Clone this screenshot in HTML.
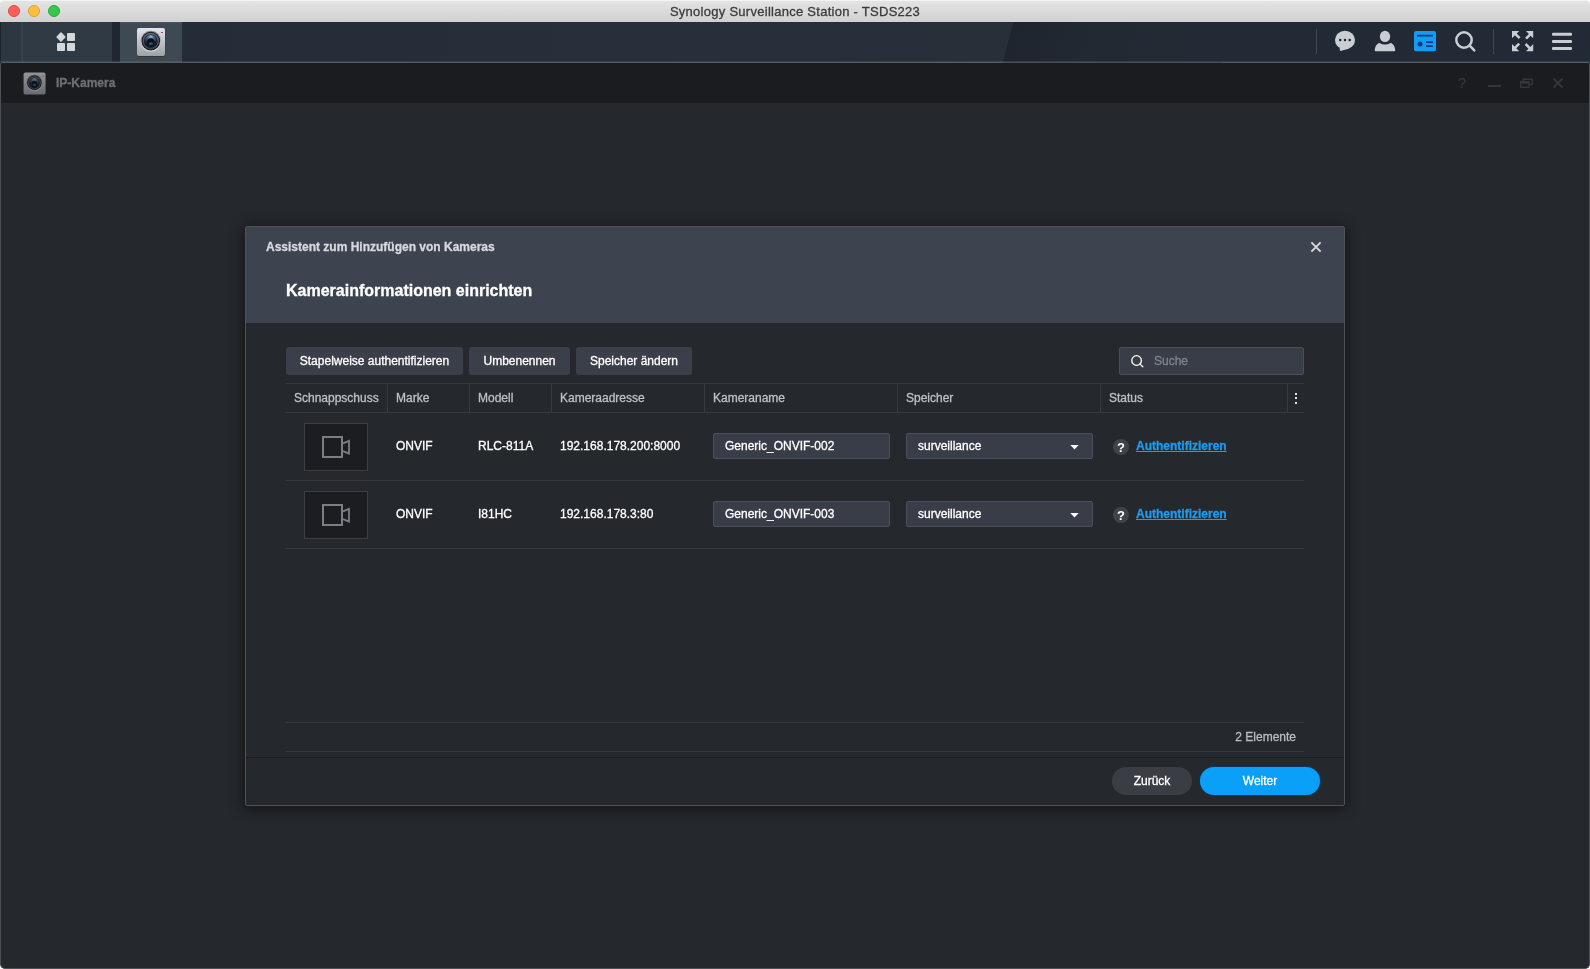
<!DOCTYPE html>
<html lang="de">
<head>
<meta charset="utf-8">
<title>Synology Surveillance Station - TSDS223</title>
<style>
*{box-sizing:border-box;margin:0;padding:0}
.abs,.btn,.th,.td,.inp,.link,.q,#titlebar .t{will-change:transform}
html,body{width:1590px;height:969px;overflow:hidden;background:#fff;font-family:"Liberation Sans",Arial,sans-serif;font-size:12px;color:#fff;-webkit-text-stroke:0.3px}
.abs{position:absolute}
#titlebar{position:absolute;left:0;top:0;width:1590px;height:22px;background:linear-gradient(#e3e3e3,#d1d1d1);border-top:1px solid #f4f4f4;border-radius:4px 4px 0 0}
#titlebar .t{position:absolute;left:0;right:0;top:-1px;height:22px;line-height:23px;text-align:center;font-size:13px;color:#3c3c3c;letter-spacing:0.27px}
.tl{position:absolute;top:4px;width:12px;height:12px;border-radius:50%}
#toolbar{position:absolute;left:0;top:22px;width:1590px;height:40px;background:#222b35}
#tbline{position:absolute;left:0;top:62px;width:1590px;height:8px;background:#212a34}
#win{position:absolute;left:0;top:62px;width:1590px;height:907px;background:#25282d;border:1px solid #4d5055;border-top-color:#575c63;border-radius:3px 3px 5px 5px;overflow:hidden}
#winhead{position:absolute;left:0;top:0;width:1588px;height:40px;background:#1a1c20}
#dlg{position:absolute;left:245px;top:226px;width:1100px;height:580px;background:#25282d;border:1px solid #4e5258;border-radius:2px;box-shadow:0 2px 14px 2px rgba(0,0,0,.45)}
#dhead{position:absolute;left:0;top:0;width:1098px;height:96px;background:#3e444f}
.btn{position:absolute;top:347px;height:28px;line-height:28px;background:#3a3f49;border-radius:3px;text-align:center;color:#fff;font-size:12px}
.hl{position:absolute;height:1px;background:#373b41}
.vl{position:absolute;width:1px;background:#373b41;top:384px;height:28px}
.th{position:absolute;top:383px;height:30px;line-height:30px;color:#bdc0c5;font-size:12px}
.td{position:absolute;height:68px;line-height:67px;color:#fff;font-size:12px}
.inp{position:absolute;height:26px;line-height:24px;background:#383d47;border:1px solid #4a4f59;border-radius:2px;color:#fff;font-size:12px;padding-left:11px}
.thumb{position:absolute;left:304px;width:64px;height:48px;background:#1b1d21;border:1px solid #3b3e44}
.link{position:absolute;color:#1c9cf0;font-weight:bold;text-decoration:underline;font-size:12px;line-height:14px}
.q{position:absolute;width:16px;height:16px;border-radius:50%;background:#3f434b;color:#fff;font-weight:bold;font-size:13px;line-height:17px;text-align:center;-webkit-text-stroke:0}
</style>
</head>
<body>
<div id="titlebar">
  <div class="tl" style="left:8px;background:#fc5f58;border:1px solid #df4840"></div>
  <div class="tl" style="left:28px;background:#fdbd3f;border:1px solid #dea032"></div>
  <div class="tl" style="left:48px;background:#35c94b;border:1px solid #25a93a"></div>
  <div class="t">Synology Surveillance Station - TSDS223</div>
</div>
<div id="toolbar">
  <div class="abs" style="left:182px;top:0;width:840px;height:40px;background:linear-gradient(90deg,#232c37,#262f3a 60%,#273039)"></div>
  <div class="abs" style="left:1008px;top:0;width:220px;height:40px;background:linear-gradient(90deg,#1e252f,#212933 40%,#222b35);transform:skewX(-14.500deg)"></div>
  <div class="abs" style="left:0;top:0;width:21px;height:40px;background:#2d3742;border-left:1px solid #1d242d"></div>
  <div class="abs" style="left:21px;top:0;width:2px;height:40px;background:#39424c"></div>
  <div class="abs" style="left:23px;top:0;width:89px;height:40px;background:#303a45"></div>
  <div class="abs" style="left:112px;top:0;width:8px;height:40px;background:#1f2733"></div>
  <div class="abs" style="left:120px;top:0;width:62px;height:40px;background:#3e4953;border-top:1px solid #4c565f"></div>
  <div class="abs" style="left:0;top:39px;width:1590px;height:1px;background:rgba(120,130,140,.22)"></div>

  <!-- grid icon -->
  <svg class="abs" style="left:54px;top:8px" width="24" height="24" viewBox="54 30 24 24">
    <g fill="#d4d8dd">
      <rect x="57.5" y="33.5" width="7" height="7" rx="0.8" transform="rotate(45 61 37)"/>
      <rect x="67" y="33" width="8" height="8" rx="1"/>
      <rect x="57" y="43" width="8" height="8" rx="1"/>
      <rect x="67" y="43" width="8" height="8" rx="1"/>
    </g>
  </svg>
  <!-- camera app icon -->
  <svg class="abs" style="left:135px;top:4px" width="32" height="32" viewBox="0 0 32 32">
    <defs>
      <linearGradient id="cb" x1="0" y1="0" x2="0" y2="1"><stop offset="0" stop-color="#e4e6ea"/><stop offset="0.5" stop-color="#c0c3c9"/><stop offset="1" stop-color="#9da1a8"/></linearGradient>
      <radialGradient id="cl" cx="0.5" cy="0.12" r="0.8"><stop offset="0" stop-color="#86b6dc"/><stop offset="0.4" stop-color="#3c6083"/><stop offset="0.8" stop-color="#16222f"/><stop offset="1" stop-color="#101821"/></radialGradient>
      <linearGradient id="cband" x1="0" y1="0" x2="0" y2="1"><stop offset="0" stop-color="#626973"/><stop offset="1" stop-color="#3a4049"/></linearGradient>
      <linearGradient id="cr" x1="0" y1="0" x2="0" y2="1"><stop offset="0" stop-color="#7e828a"/><stop offset="1" stop-color="#e6e8eb"/></linearGradient>
    </defs>
    <rect x="2.3" y="2.8" width="28" height="28" rx="2" fill="#1a2029" opacity="0.55"/>
    <rect x="2" y="2" width="28" height="28" rx="2" fill="url(#cb)"/>
    <circle cx="15.800" cy="15.100" r="10.400" fill="url(#cr)"/>
    <circle cx="15.800" cy="15.100" r="9.300" fill="#14171d"/>
    <circle cx="15.800" cy="15.100" r="8.400" fill="url(#cband)"/>
    <circle cx="15.800" cy="15.100" r="6.700" fill="#0d1117"/>
    <circle cx="15.800" cy="15.100" r="6.200" fill="url(#cl)"/>
    <circle cx="15.800" cy="16.100" r="3.800" fill="#0a0e14"/>
    <ellipse cx="15.800" cy="17.700" rx="2.100" ry="1.400" fill="#33506b"/>
    <ellipse cx="27" cy="6.400" rx="1.700" ry="1.300" fill="#f0d8dc" opacity=".7"/>
    <rect x="26.100" y="6" width="1.800" height="1" rx=".3" fill="#9c2b3a"/>
  </svg>
  <!-- right icons -->
  <div class="abs" style="left:1316px;top:7px;width:1px;height:25px;background:#3f4852"></div>
  <div class="abs" style="left:1493px;top:7px;width:1px;height:25px;background:#3f4852"></div>
  <svg class="abs" style="left:1330px;top:4px" width="250" height="32" viewBox="1330 26 250 32">
    <!-- chat -->
    <ellipse cx="1345" cy="40.050" rx="10.050" ry="9.250" fill="#c9cdd4"/>
    <path d="M1339.500 47.300L1340.100 50.500Q1340.250 51 1340.900 50.900L1343 50.300L1347.500 48.900Z" fill="#c9cdd4"/>
    <circle cx="1340.200" cy="40.100" r="1.250" fill="#1d242d"/><circle cx="1345" cy="40.100" r="1.250" fill="#1d242d"/><circle cx="1349.700" cy="40.100" r="1.250" fill="#1d242d"/>
    <!-- user -->
    <ellipse cx="1385" cy="36.450" rx="5.150" ry="5.650" fill="#c9cdd4"/>
    <path d="M1374.800 50.400C1374.800 46.800 1376.700 43.700 1379.400 43Q1385 46.200 1390.600 43C1393.300 43.700 1395.200 46.800 1395.200 50.400Q1395.200 51.200 1394.400 51.200H1375.600Q1374.800 51.200 1374.800 50.400Z" fill="#c9cdd4"/>
    <!-- card -->
    <rect x="1414" y="31" width="22" height="20.200" rx="2" fill="#119df6"/>
    <rect x="1417" y="34.800" width="16" height="1.700" fill="#0b3a78"/>
    <circle cx="1420" cy="44" r="2.500" fill="#0b3a78"/>
    <rect x="1426" y="41.300" width="7" height="1.700" fill="#0b3a78"/>
    <rect x="1426" y="45.300" width="7" height="1.700" fill="#0b3a78"/>
    <!-- search -->
    <circle cx="1464" cy="40" r="7.700" fill="none" stroke="#c9cdd4" stroke-width="2.500"/>
    <path d="M1469.700 45.700L1474.300 50.300" stroke="#c9cdd4" stroke-width="2.500" stroke-linecap="round"/>
    <!-- fullscreen -->
    <g fill="#c9cdd4">
      <path d="M1512 31h7.200l-2.500 2.500 3.800 3.800-1.800 1.800-3.800-3.800-2.900 2.900z"/>
      <path d="M1533.200 31v7.200l-2.500-2.500-3.800 3.800-1.800-1.800 3.800-3.800-2.900-2.900z"/>
      <path d="M1512 51.200v-7.200l2.500 2.500 3.800-3.800 1.800 1.800-3.800 3.800 2.900 2.900z"/>
      <path d="M1533.200 51.200h-7.200l2.500-2.500-3.800-3.800 1.800-1.800 3.800 3.800 2.900-2.900z"/>
    </g>
    <!-- menu -->
    <g fill="#c9cdd4">
      <rect x="1552" y="32.800" width="20" height="3" rx="1"/>
      <rect x="1552" y="40" width="20" height="3" rx="1"/>
      <rect x="1552" y="47" width="20" height="3" rx="1"/>
    </g>
  </svg>
</div>
<div id="tbline"></div>
<div id="win"><div id="winhead">
  <svg class="abs" style="left:21px;top:7.700px;opacity:.6" width="25.140" height="25.140" viewBox="0 0 32 32">
    <rect x="2" y="2" width="28" height="28" rx="2.4" fill="url(#cb)"/>
    <circle cx="15.800" cy="15.100" r="10.400" fill="url(#cr)"/>
    <circle cx="15.800" cy="15.100" r="9.300" fill="#14171d"/>
    <circle cx="15.800" cy="15.100" r="8.400" fill="url(#cband)"/>
    <circle cx="15.800" cy="15.100" r="6.700" fill="#0d1117"/>
    <circle cx="15.800" cy="15.100" r="6.200" fill="url(#cl)"/>
    <circle cx="15.800" cy="16.100" r="3.800" fill="#0a0e14"/>
    <ellipse cx="15.800" cy="17.700" rx="2.100" ry="1.400" fill="#33506b"/>
    <ellipse cx="27" cy="6.400" rx="1.700" ry="1.300" fill="#f0d8dc" opacity=".7"/>
    <rect x="26.100" y="6" width="1.800" height="1" rx=".3" fill="#9c2b3a"/>
  </svg>
  <div class="abs" style="left:55px;top:0;height:40px;line-height:40px;font-weight:bold;font-size:12px;color:#6d7075">IP-Kamera</div>
  <div class="abs" style="left:1454px;top:11px;width:14px;height:18px;line-height:18px;text-align:center;font-size:15px;color:#33363c">?</div>
  <div class="abs" style="left:1487px;top:22px;width:13px;height:2px;background:#33363c"></div>
  <svg class="abs" style="left:1518px;top:14px" width="16" height="12" viewBox="0 0 16 12">
    <path d="M4.200 4V2.200h9v5.300h-2.500" fill="none" stroke="#33363c" stroke-width="1.500"/>
    <path d="M1 4h9.700v7H1z" fill="#33363c"/><rect x="2.400" y="6.600" width="6.900" height="3" fill="#1a1c20"/>
  </svg>
  <svg class="abs" style="left:1551px;top:14px" width="12" height="12" viewBox="0 0 12 12"><path d="M1.500 1.500l9 9M10.500 1.500l-9 9" stroke="#33363c" stroke-width="1.800" fill="none"/></svg>
</div></div>

<div id="dlg">
  <div id="dhead">
    <div class="abs" style="left:20px;top:13px;font-weight:bold;font-size:12px;line-height:14px;color:#d6d9de">Assistent zum Hinzufügen von Kameras</div>
    <div class="abs" style="left:40px;top:54px;font-weight:bold;font-size:16px;line-height:20px;color:#fff">Kamerainformationen einrichten</div>
  </div>
  <div class="abs" style="left:0;top:96px;width:1098px;height:2px;background:linear-gradient(#22252d,#24272d)"></div>
</div>

<!-- dialog contents in page coordinates -->
<svg class="abs" style="left:1310px;top:241px" width="12" height="12" viewBox="0 0 12 12"><path d="M1.400 1.400l9.200 9.200M10.600 1.400l-9.200 9.200" stroke="#d5d8dc" stroke-width="1.900" fill="none"/></svg>
<div class="abs" style="left:1295px;top:393px;width:2px;height:2px;background:#e0e2e5"></div>
<div class="abs" style="left:1295px;top:397px;width:2px;height:2px;background:#e0e2e5"></div>
<div class="abs" style="left:1295px;top:402px;width:2px;height:2px;background:#e0e2e5"></div>
<div class="btn" style="left:286px;width:177px">Stapelweise authentifizieren</div>
<div class="btn" style="left:469px;width:101px">Umbenennen</div>
<div class="btn" style="left:576px;width:116px">Speicher ändern</div>
<div class="inp" style="left:1119px;top:347px;width:185px;height:28px;line-height:26px;padding-left:34px;color:#7f848c">Suche<svg class="abs" style="left:10px;top:6px" width="16" height="16" viewBox="1130 354 16 16"><circle cx="1136.600" cy="360.500" r="4.800" fill="none" stroke="#fff" stroke-width="1.300"/><path d="M1140.100 364.100l2.700 2.700" stroke="#fff" stroke-width="1.300" stroke-linecap="round"/></svg></div>

<div class="hl" style="left:286px;top:383px;width:1018px"></div>
<div class="hl" style="left:286px;top:412px;width:1018px"></div>
<div class="vl" style="left:387px"></div>
<div class="vl" style="left:469px"></div>
<div class="vl" style="left:551px"></div>
<div class="vl" style="left:704px"></div>
<div class="vl" style="left:897px"></div>
<div class="vl" style="left:1100px"></div>
<div class="vl" style="left:1287px"></div>
<div class="th" style="left:294px">Schnappschuss</div>
<div class="th" style="left:396px">Marke</div>
<div class="th" style="left:478px">Modell</div>
<div class="th" style="left:560px">Kameraadresse</div>
<div class="th" style="left:713px">Kameraname</div>
<div class="th" style="left:906px">Speicher</div>
<div class="th" style="left:1109px">Status</div>

<!-- row 1 -->
<div class="thumb" style="top:423px"><svg class="abs" style="left:16px;top:11px" width="30" height="24" viewBox="321 435 30 24"><rect x="323" y="437" width="19" height="20" fill="none" stroke="#7b7e83" stroke-width="2"/><path d="M343 443.300L349 440.800V453.700L343 451.200" fill="none" stroke="#7b7e83" stroke-width="1.800" stroke-linejoin="miter"/></svg></div>
<div class="td" style="left:396px;top:413px">ONVIF</div>
<div class="td" style="left:478px;top:413px">RLC-811A</div>
<div class="td" style="left:560px;top:413px">192.168.178.200:8000</div>
<div class="inp" style="left:713px;top:433px;width:177px">Generic_ONVIF-002</div>
<div class="inp" style="left:906px;top:433px;width:187px">surveillance<svg class="abs" style="right:13px;top:11px" width="9" height="5" viewBox="0 0 9 5"><path d="M0.300 0h8.400L4.500 4.600z" fill="#fff"/></svg></div>
<div class="q" style="left:1113px;top:439px">?</div>
<div class="link" style="left:1136px;top:439px">Authentifizieren</div>
<div class="hl" style="left:286px;top:480px;width:1018px"></div>
<!-- row 2 -->
<div class="thumb" style="top:491px"><svg class="abs" style="left:16px;top:11px" width="30" height="24" viewBox="321 435 30 24"><rect x="323" y="437" width="19" height="20" fill="none" stroke="#7b7e83" stroke-width="2"/><path d="M343 443.300L349 440.800V453.700L343 451.200" fill="none" stroke="#7b7e83" stroke-width="1.800" stroke-linejoin="miter"/></svg></div>
<div class="td" style="left:396px;top:481px">ONVIF</div>
<div class="td" style="left:478px;top:481px">I81HC</div>
<div class="td" style="left:560px;top:481px">192.168.178.3:80</div>
<div class="inp" style="left:713px;top:501px;width:177px">Generic_ONVIF-003</div>
<div class="inp" style="left:906px;top:501px;width:187px">surveillance<svg class="abs" style="right:13px;top:11px" width="9" height="5" viewBox="0 0 9 5"><path d="M0.300 0h8.400L4.500 4.600z" fill="#fff"/></svg></div>
<div class="q" style="left:1113px;top:507px">?</div>
<div class="link" style="left:1136px;top:507px">Authentifizieren</div>
<div class="hl" style="left:286px;top:548px;width:1018px"></div>

<div class="hl" style="left:286px;top:722px;width:1018px"></div>
<div class="abs" style="left:1096px;top:723px;width:200px;height:28px;line-height:28px;text-align:right;color:#b9bdc3;font-size:12px">2 Elemente</div>
<div class="hl" style="left:286px;top:751px;width:1018px"></div>
<div class="abs" style="left:246px;top:757px;width:1098px;height:1px;background:#1b1d21"></div>
<div class="abs" style="left:1112px;top:767px;width:80px;height:28px;line-height:28px;border-radius:14px;background:#3a3d44;text-align:center;color:#fff;font-size:12px">Zurück</div>
<div class="abs" style="left:1200px;top:767px;width:120px;height:28px;line-height:28px;border-radius:14px;background:#0a9ff9;box-shadow:0 0 0 .7px #0b3a66;text-align:center;color:#fff;font-size:12px">Weiter</div>
</body>
</html>
